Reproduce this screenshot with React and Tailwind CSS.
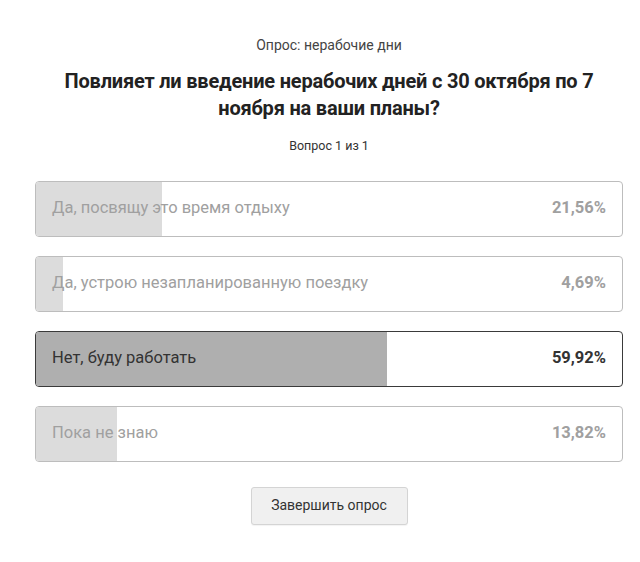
import React from 'react';

const options = [
  { id: 1, label: 'Да, посвящу это время отдыху', value: 21.56 },
  { id: 2, label: 'Да, устрою незапланированную поездку', value: 4.69 },
  { id: 3, label: 'Нет, буду работать', value: 59.92, chosen: true },
  { id: 4, label: 'Пока не знаю', value: 13.82 },
];

const fmt = (v) => v.toFixed(2).replace('.', ',') + '%';

const ResultRow = ({ label, value, chosen }) => (
  <div
    className={`relative h-[56px] rounded-[4px] border overflow-hidden bg-white ${
      chosen ? 'border-[#3a3a3a]' : 'border-[#bdbdbd]'
    }`}
  >
    {/* result bar */}
    <div
      className={`absolute left-0 top-0 bottom-0 ${chosen ? 'bg-[#afafaf]' : 'bg-[#dcdcdc]'}`}
      style={{ width: `${value}%` }}
    />
    <div className="relative flex items-center justify-between h-full pl-[16px] pr-[16px] text-[16.5px]">
      <span className={chosen ? 'text-[#333]' : 'text-[#a0a0a0]'}>{label}</span>
      <span className={`font-bold ${chosen ? 'text-[#333]' : 'text-[#a0a0a0]'}`}>{fmt(value)}</span>
    </div>
  </div>
);

export default function App() {
  return (
    <div className="w-[640px] h-[562px] bg-white font-['Roboto',sans-serif]">
      <div className="w-[588px] ml-[35px] flex flex-col items-center text-center">
        <div className="pt-[35px] text-[14px] text-[#444]">Опрос: нерабочие дни</div>
        <h1 className="mt-[12px] w-[560px] text-[20px] tracking-[-0.2px] leading-[27px] font-bold text-[#222]">
          Повлияет ли введение нерабочих дней с 30 октября по 7 ноября на ваши планы?
        </h1>
        <div className="mt-[15px] text-[12.5px] text-[#333]">Вопрос 1 из 1</div>

        <div className="mt-[25px] w-full flex flex-col gap-[19px] text-left">
          {options.map((o) => (
            <ResultRow key={o.id} {...o} />
          ))}
        </div>

        <button className="mt-[25px] w-[157px] h-[38px] rounded-[3px] border border-[#d4d4d4] bg-[#f0f0f0] text-[14px] text-[#333] shadow-[0_1px_1px_rgba(0,0,0,0.05)]">
          Завершить опрос
        </button>
      </div>
    </div>
  );
}
